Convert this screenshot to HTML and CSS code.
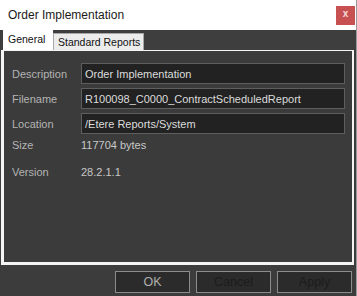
FILE: index.html
```html
<!DOCTYPE html>
<html>
<head>
<meta charset="utf-8">
<link rel="stylesheet" href="styles.css">
</head>
<body>
<div class="window">
  <div class="titlebar">
    <span class="title">Order Implementation</span>
    <span class="close">x</span>
  </div>
  <div class="tabs">
    <div class="tab active">General</div>
    <div class="tab">Standard Reports</div>
  </div>
  <div class="panel">
    <div class="row">
      <div class="label">Description</div>
      <div class="field">Order Implementation</div>
    </div>
    <div class="row">
      <div class="label">Filename</div>
      <div class="field">R100098_C0000_ContractScheduledReport</div>
    </div>
    <div class="row">
      <div class="label">Location</div>
      <div class="field">/Etere Reports/System</div>
    </div>
    <div class="row info first">
      <div class="label">Size</div>
      <div class="value">117704 bytes</div>
    </div>
    <div class="row info">
      <div class="label">Version</div>
      <div class="value">28.2.1.1</div>
    </div>
  </div>
  <div class="footer">
    <div class="btn">OK</div>
    <div class="btn disabled">Cancel</div>
    <div class="btn disabled">Apply</div>
  </div>
</div>
</body>
</html>
```

FILE: styles.css
```css
* { box-sizing: border-box; }
html, body { margin: 0; padding: 0; }
body {
  width: 357px;
  height: 296px;
  background: #3c3c3c;
  font-family: "Liberation Sans", Arial, sans-serif;
  overflow: hidden;
}
.window {
  width: 357px;
  height: 296px;
  display: flex;
  flex-direction: column;
  border-right: 1px solid #9a9a9a;
}
.titlebar {
  height: 30px;
  background: #ffffff;
  display: flex;
  align-items: center;
  padding-left: 8px;
  padding-right: 1px;
}
.title {
  font-size: 12px;
  color: #1a1a1a;
}
.close {
  margin-left: auto;
  width: 19px;
  height: 19px;
  background: #c75050;
  color: #f4dede;
  font-size: 10px;
  font-weight: bold;
  display: flex;
  align-items: center;
  justify-content: center;
  line-height: 1;
  padding-bottom: 2px;
}
.tabs {
  height: 20px;
  display: flex;
  align-items: flex-end;
  padding-left: 3px;
  background: #3e3e3e;
}
.tab {
  height: 17px;
  background: #ececec;
  border: 1px solid #a8a8a8;
  border-bottom: none;
  font-size: 10.5px;
  color: #111;
  padding: 2px 3px 0 4px;
  white-space: nowrap;
}
.tab.active {
  height: 20px;
  background: #ffffff;
  border-color: #ffffff;
  padding: 2px 7px 0 4px;
  width: 50px;
}
.panel {
  margin: 0 2px 0 1px;
  height: 215px;
  border: 3px solid #f4f4f4;
  border-top-width: 1px;
  border-right-width: 2px;
  background: #3b3b3b;
  padding: 12px 7px 0 8px;
  display: flex;
  flex-direction: column;
  gap: 4px;
}
.row {
  display: flex;
  align-items: center;
  height: 21px;
}
.row.info {
  height: 20px;
  margin-top: 3px;
}
.row.info.first {
  margin-top: -3px;
}
.label {
  width: 69px;
  flex: none;
  font-size: 11px;
  color: #b4b4b4;
}
.field {
  width: 265px;
  height: 21px;
  background: #222222;
  border: 1px solid #5e5e5e;
  color: #dcdcdc;
  font-size: 11px;
  padding: 0 3px;
  display: flex;
  align-items: center;
  white-space: nowrap;
}
.value {
  font-size: 11px;
  color: #c8c8c8;
}
.footer {
  flex: 1;
  display: flex;
  justify-content: flex-end;
  align-items: flex-start;
  gap: 6px;
  padding: 6px 4px 0 0;
}
.btn {
  width: 75px;
  height: 22px;
  background: #2b2b2b;
  border: 1px solid #8c8c8c;
  color: #b0b0b0;
  font-size: 12.5px;
  display: flex;
  align-items: center;
  justify-content: center;
}
.btn.disabled {
  color: #1c1c1c;
}
```
